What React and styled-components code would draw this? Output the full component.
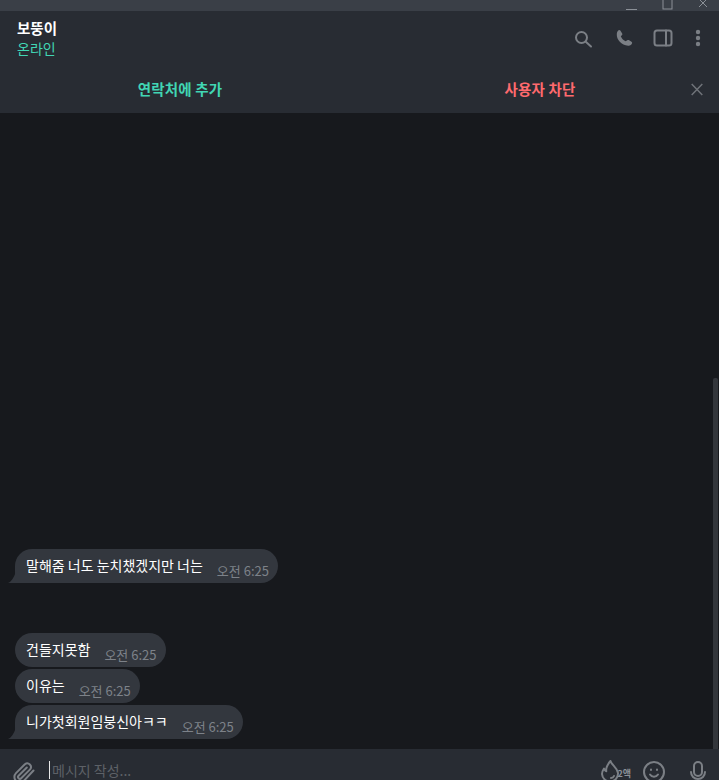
import React from "react";
import styled, { createGlobalStyle } from "styled-components";

const Global = createGlobalStyle`
  html, body { margin: 0; padding: 0; height: 100%; background: #17191d; overflow: hidden; }
  #root { height: 100%; }
  * { box-sizing: border-box; }
`;
const Page = styled.div`
  position: relative; width: 719px; height: 780px; overflow: hidden; display: flex; flex-direction: column;
  font-family: "Noto Sans CJK KR", "Noto Sans", sans-serif; color: #fff; background: #17191d;
`;
const TitleBar = styled.div`
  height: 11px; flex: none; background: #3a3f47; display: flex; justify-content: flex-end; align-items: flex-end;
  padding-right: 10px; gap: 25px; overflow: hidden;
`;
const WinGlyph = styled.svg`
  width: 11px; height: 11px; flex: none; display: block; fill: none; stroke: #8b9097; stroke-width: 1;
`;
const Header = styled.header`
  height: 59px; flex: none; background: #282c33; display: flex; justify-content: space-between; align-items: flex-start;
  padding: 7px 14px 0 17px;
`;
const Peer = styled.div`display: flex; flex-direction: column;`;
const PeerName = styled.div`font-size: 14.500px; font-weight: 700; line-height: 20px; color: #fff;`;
const PeerStatus = styled.div`font-size: 14px; line-height: 20px; color: #41d6b4;`;
const Tools = styled.div`display: flex; align-items: center; gap: 15px; height: 40px;`;
const ToolIcon = styled.svg`
  width: ${p => p.$w || 24}px; height: 24px; flex: none; fill: none; stroke: #7b7f85; stroke-width: 2; stroke-linecap: round; stroke-linejoin: round;
`;
const ActionBar = styled.div`
  height: 43px; flex: none; background: #282c33; display: grid; grid-template-columns: 360px 360px; align-items: center; position: relative;
`;
const Action = styled.div`
  text-align: center; font-size: 14.500px; font-weight: 700; color: ${p => p.$color}; padding-bottom: 7px; letter-spacing: 0.15px;
`;
const CloseBar = styled.svg`
  position: absolute; right: 15px; top: 11px; width: 15px; height: 15px; fill: none; stroke: #6f7379; stroke-width: 1.5;
`;
const Messages = styled.main`
  flex: 1; min-height: 0; background: #17191d; display: flex; flex-direction: column; justify-content: flex-end; padding: 0 0 10px 15px; gap: 2px;
`;
const Bubble = styled.div`
  position: relative; align-self: flex-start; height: 34px; background: #33373e; border-radius: 17px;
  ${p => p.$tail && "border-bottom-left-radius: 0;"}
  margin-bottom: ${p => p.$mb || 0}px; padding: 0 9px 0 11px; display: flex; align-items: flex-start; gap: 14px;
`;
const Tail = styled.svg`
  position: absolute; left: -7px; bottom: 0; width: 8px; height: 12px; fill: #33373e;
`;
const Text = styled.span`
  font-size: 14px; line-height: 20px; padding-top: 6px; color: #fff; white-space: nowrap;
`;
const Time = styled.span`
  font-size: 13px; line-height: 16px; padding-top: 14px; color: #7d8289; white-space: nowrap;
`;
const Composer = styled.footer`
  height: 31px; flex: none; background: #282c33; display: flex; align-items: flex-start; padding: 12px 9px 0 12px;
`;
const Clip = styled.svg`
  width: 24px; height: 24px; flex: none; fill: none; stroke: #7b7f85; stroke-width: 2; stroke-linecap: round; stroke-linejoin: round;
`;
const Input = styled.div`
  flex: 1; margin-left: 13px; border-left: 1px solid #e8e8e8; height: 18px; padding-left: 2px; font-size: 14px; line-height: 18px; color: #5d6167;
`;
const ComposerIcons = styled.div`display: flex; gap: 20px; align-items: flex-start; margin-top: -1px;`;
const Flame = styled.div`position: relative; width: 24px; height: 24px;`;
const FlameBadge = styled.span`
  position: absolute; right: -9px; top: 8px; font-size: 9px; font-weight: 700; line-height: 12px; color: #8b9097;
`;
const Scrollbar = styled.div`
  position: absolute; right: 1px; top: 378px; width: 5px; height: 371px; background: #33363b; border-radius: 2px 2px 0 0;
`;

const msgs1 = [["건들지못함", 0], ["이유는", 0], ["니가첫회원임붕신아ㅋㅋ", 1]];

export default function App() {
  return (
    <Page>
      <Global />
      <TitleBar>
        <WinGlyph viewBox="0 0 11 11"><path d="M0 9.500h11" /></WinGlyph>
        <WinGlyph viewBox="0 0 11 11"><rect x="1" y="-3" width="9" height="12" /></WinGlyph>
        <WinGlyph viewBox="0 0 11 11"><path d="M1 -1l8 8M9 -1l-8 8" /></WinGlyph>
      </TitleBar>
      <Header>
        <Peer>
          <PeerName>보뚱이</PeerName>
          <PeerStatus>온라인</PeerStatus>
        </Peer>
        <Tools>
          <ToolIcon viewBox="0 0 24 24"><circle cx="7.500" cy="11.500" r="5.500" /><path d="M11.800 15.800L17 20.500" /></ToolIcon>
          <ToolIcon viewBox="0 0 24 24">
            <path fill="#7b7f85" stroke="none" d="M5.600 4.200c.6-.4 1.300-.2 1.700.3l1.900 2.900c.3.500.2 1.100-.1 1.500l-1.300 1.400c.9 2.300 2.400 3.800 4.800 5l1.700-1.100c.4-.3 1-.4 1.500-.1l2.700 1.700c.6.300.8.900.6 1.500-.6 1.500-2 2.700-3.900 2.500-6.800-.7-11.800-6-11.400-11.800.1-1.700.7-2.900 1.800-3.700z" />
          </ToolIcon>
          <ToolIcon viewBox="0 0 24 24"><rect x="2.500" y="4.500" width="17" height="15" rx="2.500" /><path d="M14 4.500v15" /></ToolIcon>
          <ToolIcon viewBox="0 0 14 24" $w={14}>
            <g fill="#7b7f85" stroke="none"><circle cx="7" cy="6" r="2.200" /><circle cx="7" cy="12" r="2.200" /><circle cx="7" cy="18" r="2.200" /></g>
          </ToolIcon>
        </Tools>
      </Header>
      <ActionBar>
        <Action $color="#41d6b4">연락처에 추가</Action>
        <Action $color="#ff6a6e">사용자 차단</Action>
        <CloseBar viewBox="0 0 15 15"><path d="M2.700 3l10.600 11M13.300 3L2.700 14" /></CloseBar>
      </ActionBar>
      <Messages>
        <Bubble $tail $mb={48}>
          <Tail viewBox="0 0 8 12"><path d="M8 0v12H0c3-1 6-5 8-12z" /></Tail>
          <Text>말해줌 너도 눈치챘겠지만 너는</Text>
          <Time>오전 6:25</Time>
        </Bubble>
        {msgs1.map(([t, tail]) => (
          <Bubble key={t} $tail={tail}>
            {tail ? <Tail viewBox="0 0 8 12"><path d="M8 0v12H0c3-1 6-5 8-12z" /></Tail> : null}
            <Text>{t}</Text>
            <Time>오전 6:25</Time>
          </Bubble>
        ))}
      </Messages>
      <Composer>
        <Clip viewBox="0 0 24 24"><path d="M21.500 9.500l-9.700 10.400a5.500 5.500 0 0 1-7.800-7.800l8.900-8.900a3.700 3.700 0 0 1 5.200 5.200l-8.900 8.900a1.800 1.800 0 0 1-2.600-2.600l8.200-8.200" /></Clip>
        <Input>메시지 작성...</Input>
        <ComposerIcons>
          <Flame>
            <Clip viewBox="0 0 24 24"><path d="M12.500 1c1 4 6.500 6 7.500 12a8 8 0 0 1-16 1c0-2 1-4 2-5.500.5 1.500 1.200 2.500 2.300 2.800C7.500 8 10 4 12.500 1z" /><path d="M13 18c1.500 0 2.500-.7 3-2" /></Clip>
            <FlameBadge>2액</FlameBadge>
          </Flame>
          <Clip viewBox="0 0 24 24"><circle cx="12" cy="12" r="10" /><path d="M8 14.500c1 1.500 2.300 2.200 4 2.200s3-.7 4-2.200M9 9.500v.5M15 9.500v.5" /></Clip>
          <Clip viewBox="0 0 24 24"><rect x="8" y="2" width="8" height="14" rx="4" /><path d="M5 12a7 7 0 0 0 14 0M12 19v3" /></Clip>
        </ComposerIcons>
      </Composer>
      <Scrollbar />
    </Page>
  );
}
